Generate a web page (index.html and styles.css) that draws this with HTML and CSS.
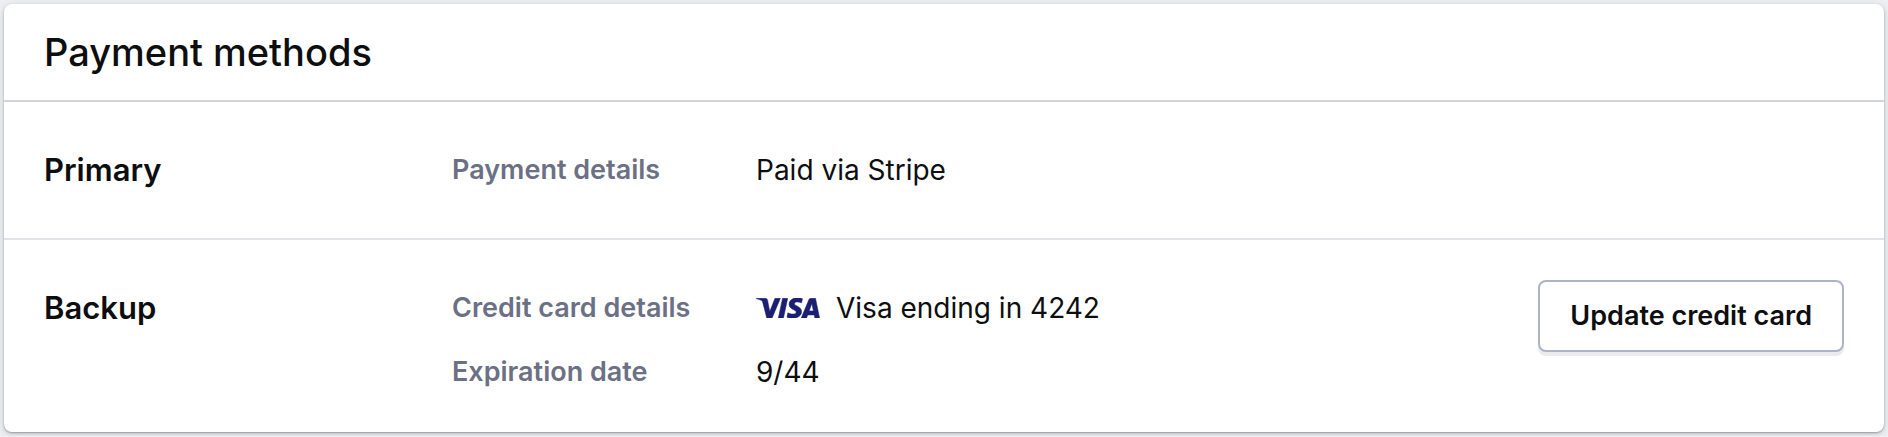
FILE: index.html
```html
<!DOCTYPE html>
<html lang="en">
<head>
    <meta charset="utf-8">
    <meta name="viewport" content="width=device-width, initial-scale=1">
    <title>Payment methods</title>
    <link rel="stylesheet" href="styles.css">
</head>
<body>
<section class="card">
    <header class="card-header">
        <h2 class="card-title">Payment methods</h2>
    </header>
    <div class="method">
        <h3 class="method-name">Primary</h3>
        <dl class="details">
            <dt>Payment details</dt>
            <dd>Paid via Stripe</dd>
        </dl>
    </div>
    <div class="method">
        <h3 class="method-name">Backup</h3>
        <dl class="details">
            <dt>Credit card details</dt>
            <dd>
                <svg class="visa" viewBox="0 8.2 24 7.6" aria-hidden="true">
                    <path d="M9.112 8.262L5.97 15.758H3.92L2.374 9.775c-.094-.368-.175-.503-.461-.658C1.447 8.864.677 8.627 0 8.479l.046-.217h3.3a.904.904 0 01.894.764l.817 4.338 2.018-5.102zm8.033 5.049c.008-1.979-2.736-2.088-2.717-2.972.006-.269.262-.555.822-.628a3.66 3.66 0 011.913.336l.34-1.59a5.207 5.207 0 00-1.814-.333c-1.917 0-3.266 1.02-3.278 2.479-.012 1.079.963 1.68 1.698 2.04.756.367 1.01.603 1.006.931-.005.504-.602.725-1.16.734-.975.015-1.54-.263-1.992-.473l-.351 1.642c.453.208 1.289.39 2.156.398 2.037 0 3.37-1.006 3.377-2.564m5.061 2.447H24l-1.565-7.496h-1.656a.883.883 0 00-.826.55l-2.909 6.946h2.036l.405-1.12h2.488zm-2.163-2.656l1.02-2.815.588 2.815zm-8.16-4.84l-1.603 7.496H8.34l1.605-7.496z"/>
                </svg>
                Visa ending in 4242
            </dd>
            <dt>Expiration date</dt>
            <dd>9/44</dd>
        </dl>
        <button class="btn" type="button">Update credit card</button>
    </div>
</section>
</body>
</html>
```
FILE: styles.css
```css
* {box-sizing:border-box;}
body {margin:0; padding:4px; background:#eeeff2; color:#0d0e10; font-family:Inter, "Liberation Sans", sans-serif; font-size:28px; line-height:40px;}
h2, h3, dl, dd {margin:0;}

.card {background:#fff; border-radius:8px; box-shadow:0 1px 2px rgba(0,0,0,.3), 0 2px 8px rgba(0,0,0,.15);}
.card-header {padding:24px 40px; border-bottom:2px solid #d0d3e0;}
.card-title {font-size:38px; line-height:48px; font-weight:500;}

.method {display:flex; align-items:flex-start; padding:40px;}
.method + .method {padding-bottom:32px; border-top:2px solid #e3e4e9;}
.method-name {flex:0 0 408px; font-size:31px; line-height:56px; font-weight:600;}

.details {flex:1; display:grid; grid-template-columns:280px 1fr; row-gap:8px; column-gap:24px; line-height:56px;}
.details dt {color:#6c7084; font-size:27px; font-weight:600;}
.details dd {display:flex; align-items:center; gap:16px;}
.visa {width:64px; height:20px; fill:#1a1f71; stroke:#1a1f71; stroke-width:.2;}

.btn {padding:14px 30px; font:inherit; font-size:27px; font-weight:600; color:inherit; background:#fff; border:2px solid #aeb3c7; border-radius:8px; box-shadow:0 4px 0 #ebebeb;}
```
